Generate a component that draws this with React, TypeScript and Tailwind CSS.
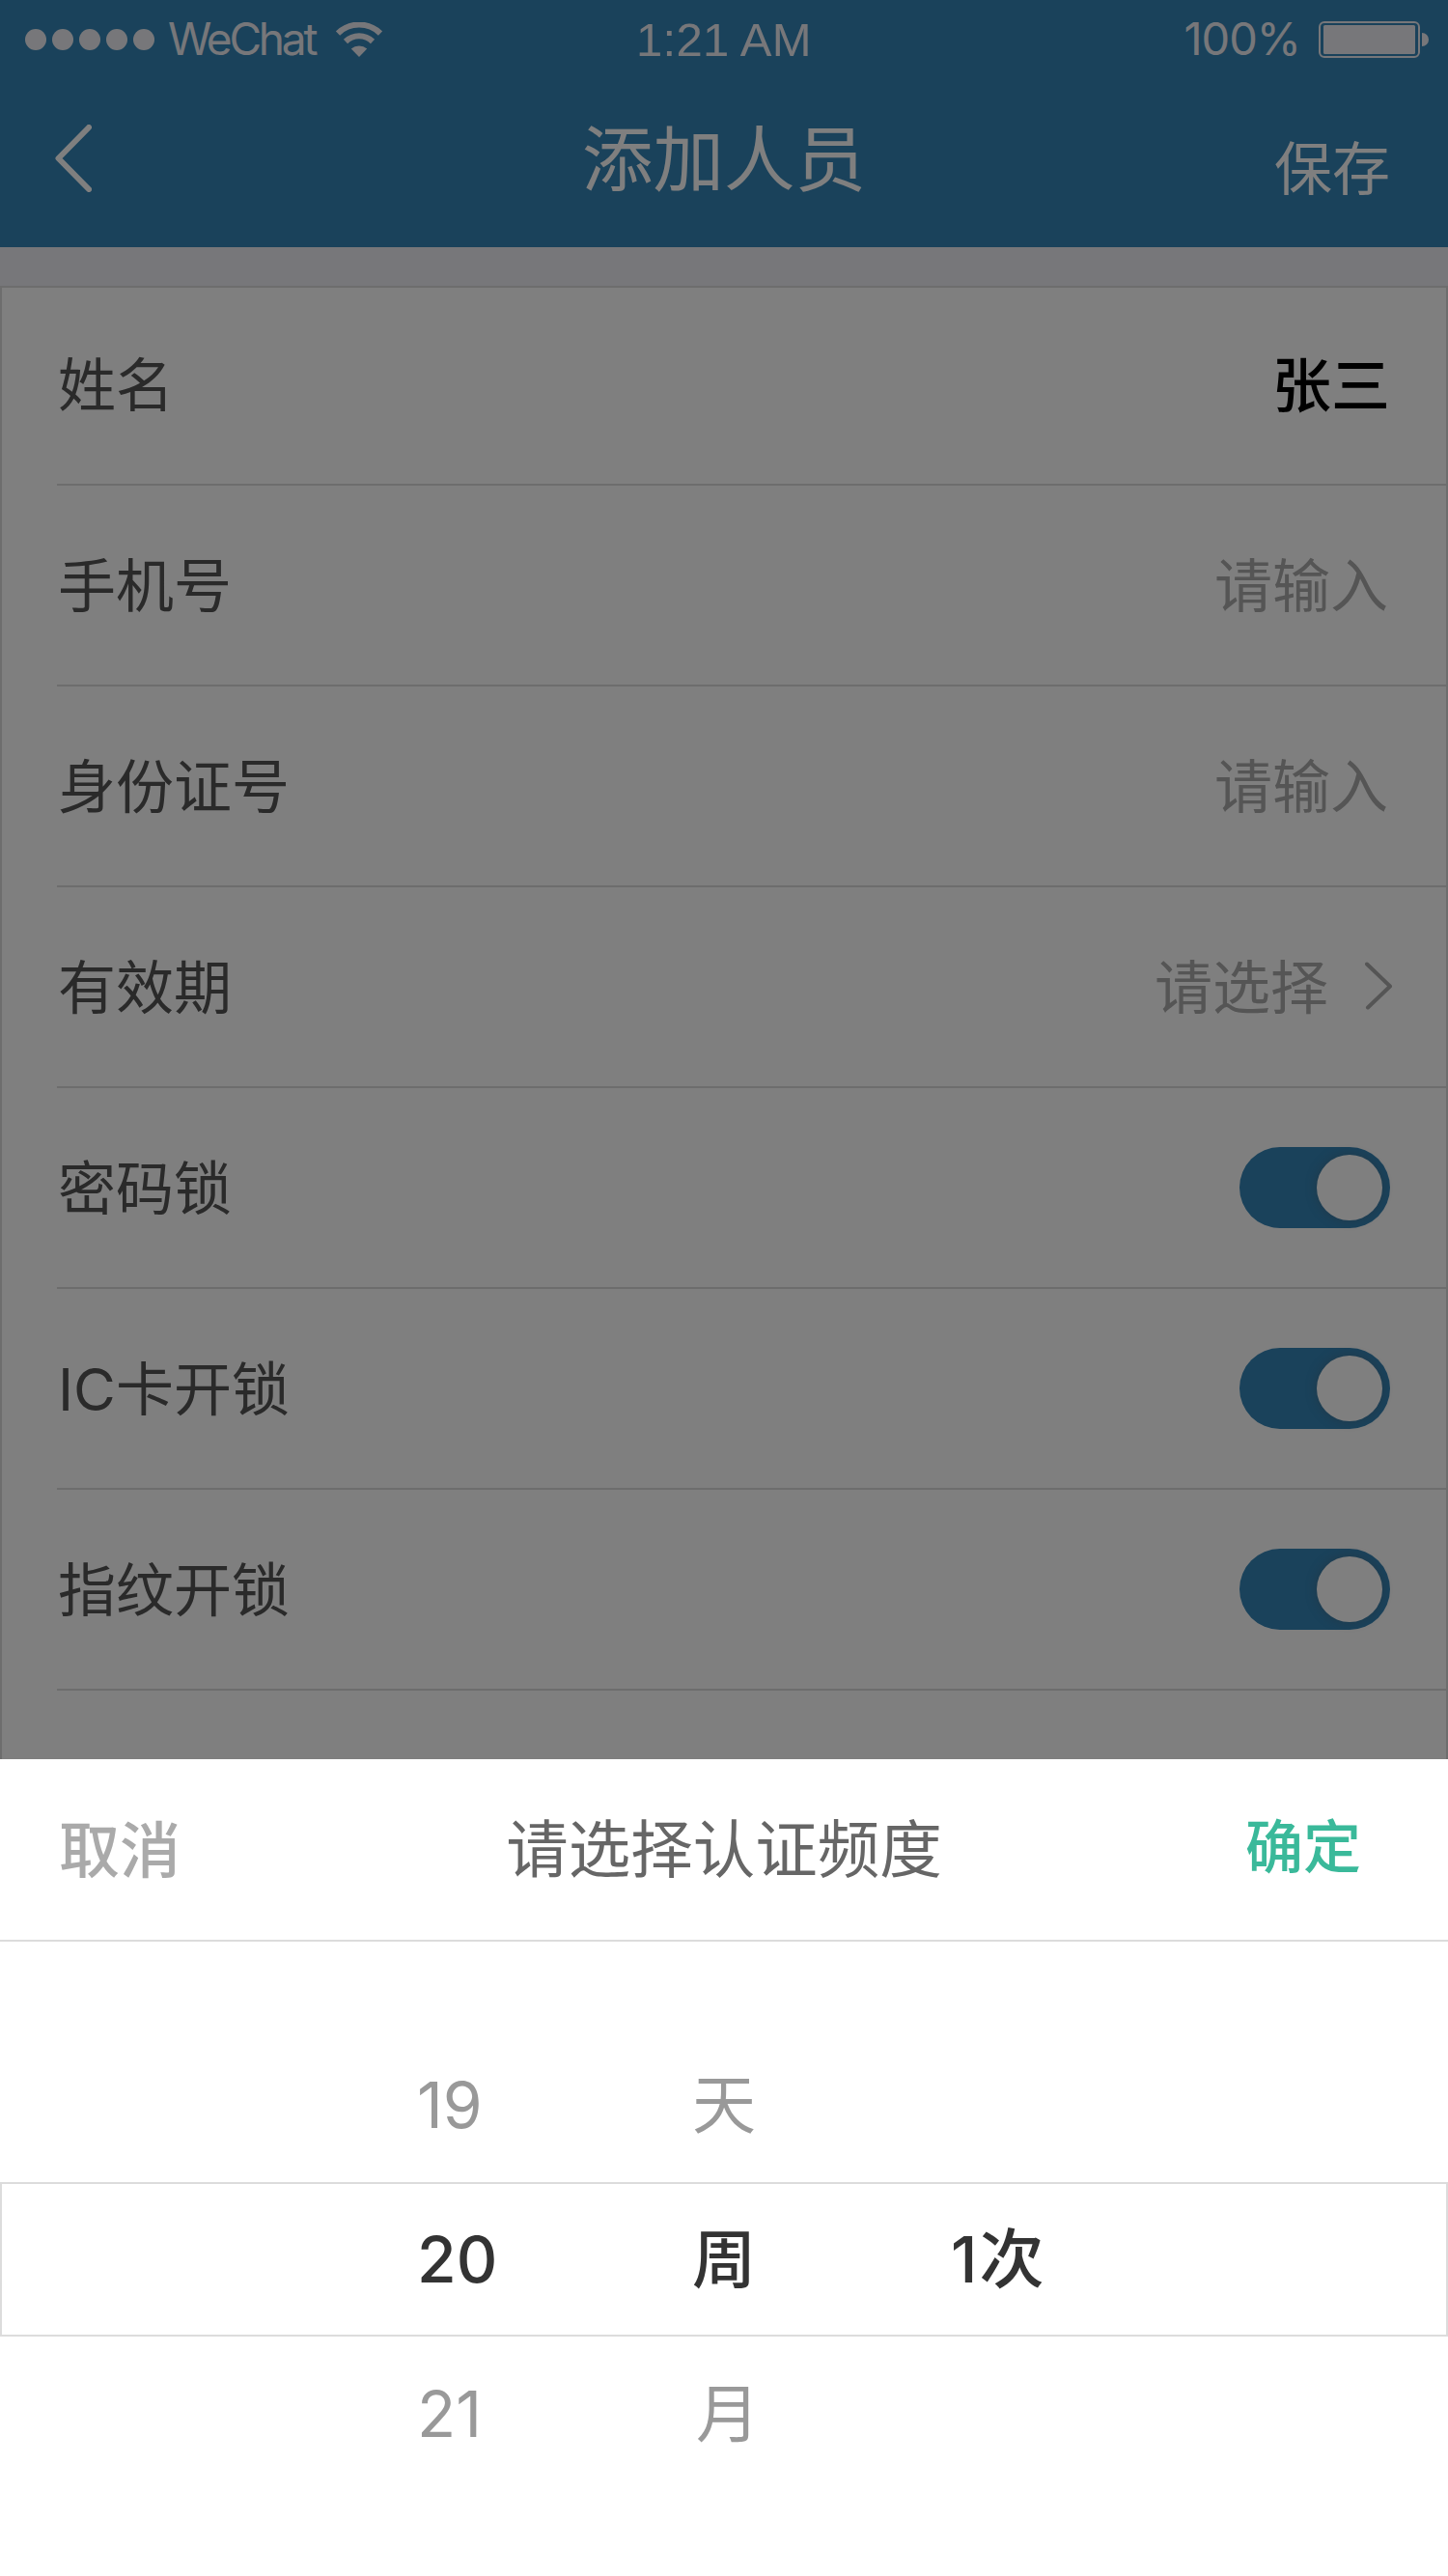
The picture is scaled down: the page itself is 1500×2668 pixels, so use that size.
import type { ReactNode } from "react";

function Wifi() {
  return (
    <svg className="h-9 w-12" viewBox="0 0 48 36" fill="none">
      <path d="M2 11.5 A31.5 31.5 0 0 1 46 11.5" stroke="#efeff4" strokeWidth="6" />
      <path d="M10 20 A20 20 0 0 1 38 20" stroke="#efeff4" strokeWidth="6" />
      <path d="M15.8 27.5 A12.5 12.5 0 0 1 32.2 27.5 L24 36 Z" fill="#efeff4" />
    </svg>
  );
}

function Battery() {
  return (
    <svg className="h-[38px] w-[114px]" viewBox="0 0 114 38" fill="none">
      <rect x="1" y="1" width="103" height="36" rx="5" stroke="#efeff4" strokeWidth="2" />
      <rect x="5" y="4" width="95" height="30" rx="1.5" fill="#efeff4" />
      <path d="M107 12 A7 7 0 0 1 107 26 Z" fill="#efeff4" />
    </svg>
  );
}

function StatusBar() {
  return (
    <div className="grid h-[82px] grid-cols-3 text-[#efeff4]">
      <div className="flex items-center pl-[26px]">
        <div className="flex gap-1.5">
          {[0, 1, 2, 3, 4].map((i) => (
            <span key={i} className="h-[22px] w-[22px] rounded-full bg-[#efeff4]" />
          ))}
        </div>
        <span className="ml-[14px] w-[154px] pb-[2px] text-[46px] leading-[80px] tracking-[-3.2px]">WeChat</span>
        <span className="ml-5">
          <Wifi />
        </span>
      </div>
      <div className="text-center font-['Liberation_Sans'] text-[49px] leading-[82px] tracking-[0.3px]">1:21 AM</div>
      <div className="flex items-center justify-end pr-5">
        <span className="mr-[19px] pb-[2px] text-[47px] leading-[80px] tracking-[-1px]">100%</span>
        <Battery />
      </div>
    </div>
  );
}

function NavBar() {
  return (
    <div className="grid h-[174px] grid-cols-3 text-white">
      <div className="pt-[47px] pl-[57px]">
        <svg className="h-[70px] w-[38px]" viewBox="0 0 38 70" fill="none">
          <path d="M35 3 L3.5 35 L35 67" stroke="#fff" strokeWidth="6" strokeLinecap="round" strokeLinejoin="round" />
        </svg>
      </div>
      <h1 className="pt-12 text-center text-[73.5px] leading-[72px]">添加人员</h1>
      <div className="pt-[63px] pr-[60px] text-right text-[60px] leading-[60px]">保存</div>
    </div>
  );
}

function Row({ label, children }: { label: string; children: ReactNode }) {
  return (
    <div className="flex h-[208px] items-center justify-between border-b-2 border-[#dadada] pr-[58px]">
      <span className="pt-[2px] pl-px text-[#555]">{label}</span>
      {children}
    </div>
  );
}

function Hint({ children }: { children: ReactNode }) {
  return <span className="pt-[2px] pr-[2px] text-[#aaa]">{children}</span>;
}

function Toggle() {
  return (
    <div className="flex h-[84px] w-[156px] items-center justify-end rounded-full bg-[#3484b6] pr-2">
      <div className="h-[68px] w-[68px] rounded-full bg-white shadow-[0_0_12px_rgba(90,80,80,0.35)]" />
    </div>
  );
}

function ChevronRight() {
  return (
    <svg className="-mr-[2px] mb-[2px] h-[50px] w-[28px]" viewBox="0 0 28 50" fill="none">
      <path d="M2 2.5 L26 25.5 L3 47.5" stroke="#aaa" strokeWidth="4" strokeLinecap="round" strokeLinejoin="round" />
    </svg>
  );
}

function Form() {
  return (
    <div className="mt-10 h-[1600px] border-2 border-[#dadada] bg-white pl-[57px] text-[60px] leading-[60px]">
      <div className="-mt-[3px]">
        <Row label="姓名">
          <span className="pt-[3px] text-[61px] font-medium text-black">张三</span>
        </Row>
      </div>
      <Row label="手机号">
        <Hint>请输入</Hint>
      </Row>
      <Row label="身份证号">
        <Hint>请输入</Hint>
      </Row>
      <Row label="有效期">
        <div className="flex items-center">
          <Hint>请选择</Hint>
          <span className="ml-9">
            <ChevronRight />
          </span>
        </div>
      </Row>
      <Row label="密码锁">
        <Toggle />
      </Row>
      <Row label="IC卡开锁">
        <Toggle />
      </Row>
      <Row label="指纹开锁">
        <Toggle />
      </Row>
    </div>
  );
}

function PickerRow({ cells, active = false }: { cells: ReactNode[]; active?: boolean }) {
  return (
    <div
      className={
        active
          ? "grid h-40 grid-cols-[430px_285px_268px_1fr] items-center border-2 border-[#dcdcdc] font-medium text-[#333]"
          : "grid h-[158px] grid-cols-[430px_285px_268px_1fr] items-center border-x-2 border-transparent text-[#999]"
      }
    >
      <span />
      {cells.map((c, i) => (
        <span key={i}>{c}</span>
      ))}
    </div>
  );
}

function PickerSheet() {
  return (
    <div className="absolute inset-x-0 bottom-0 h-[846px] bg-white">
      <div className="grid h-[189px] grid-cols-3 items-center border-b-2 border-[#dcdcdc]">
        <span className="pl-[61px] text-[63px] leading-[64px] font-medium text-[#aaa]">取消</span>
        <span className="-mx-2 text-center text-[64.5px] leading-[64px] whitespace-nowrap text-[#666]">请选择认证频度</span>
        <span className="pr-[90px] pb-[5px] text-right text-[60px] leading-[60px] font-medium text-[#3ab99a]">确定</span>
      </div>
      <div className="pt-[90px] text-[66px] leading-[66px]">
        <div className="pb-px">
          <PickerRow cells={["19", "天", ""]} />
        </div>
        <PickerRow
          cells={[
            "20",
            "周",
            <>
              <span className="mr-[2px]">1</span>
              <span className="text-[67px]">次</span>
            </>,
          ]}
          active
        />
        <div className="pt-px">
          <PickerRow cells={["21", <span className="pl-1">月</span>, ""]} />
        </div>
      </div>
    </div>
  );
}

export default function App() {
  return (
    <div className="relative h-[2668px] w-[1500px] overflow-hidden bg-[#efeff4] font-[Inter,'Noto_Sans_CJK_SC',sans-serif]">
      <header className="h-64 bg-[#3484b6]">
        <StatusBar />
        <NavBar />
      </header>
      <Form />
      <div className="absolute inset-0 bg-black/50" />
      <PickerSheet />
    </div>
  );
}
